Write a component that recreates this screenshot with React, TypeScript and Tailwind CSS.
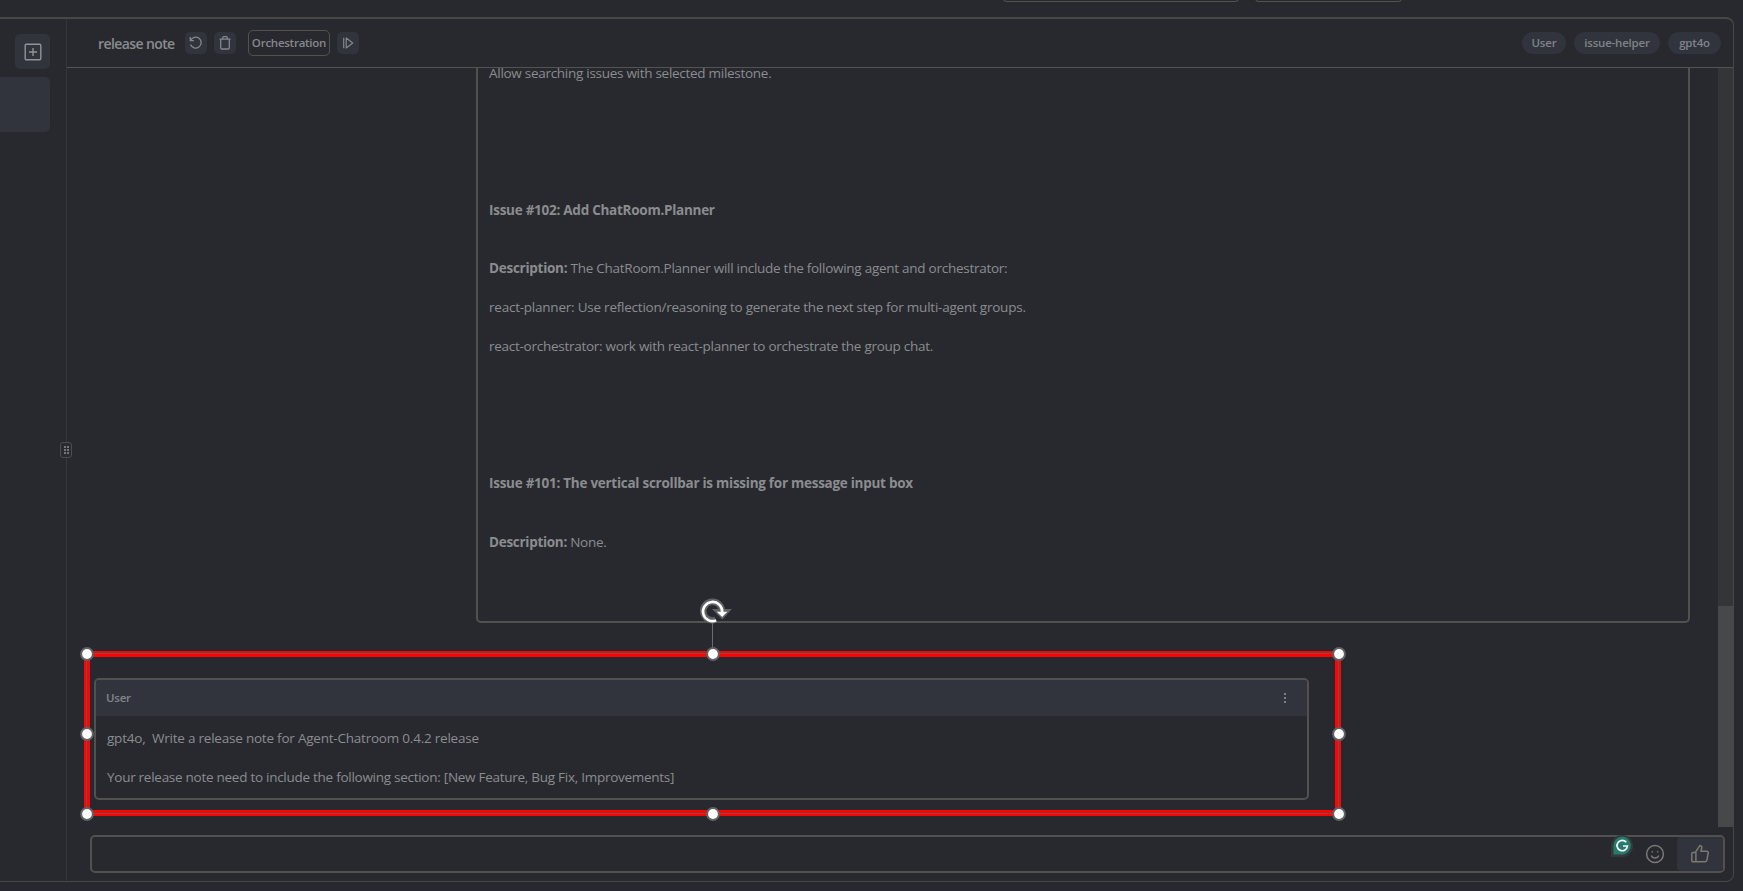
import React from "react";

const ICON = "fill-none stroke-current";

function ResetIcon() {
  return (
    <svg viewBox="0 0 14 14" className={`size-3.5 ${ICON}`} strokeWidth="1.3">
      <path d="M1.3 1v3.6h3.6M1.6 4.4A5.5 5.5 0 1 1 1.5 8.6" />
    </svg>
  );
}

function TrashIcon() {
  return (
    <svg viewBox="0 0 14 14" className={`size-3.5 ${ICON}`} strokeWidth="1.3">
      <path d="M1.5 3.2h11M4.8 3V1.6q0-.9.9-.9h2.6q.9 0 .9.9V3M2.7 3.4v8.4q0 1.2 1.2 1.2h6.2q1.2 0 1.2-1.2V3.4" />
    </svg>
  );
}

function StepIcon() {
  return (
    <svg viewBox="0 0 14 14" className={`size-3.5 ${ICON}`} strokeWidth="1.2">
      <path d="M2.7 1.800v10.400M5.200 2v10l6.500-5z" strokeLinejoin="round" />
    </svg>
  );
}

function PlusIcon() {
  return (
    <svg viewBox="0 0 18 18" className={`size-[18px] ${ICON}`} strokeWidth="1.4">
      <rect x="1.2" y="1.2" width="15.6" height="15.6" rx="1.2" />
      <path d="M9 5v8M5 9h8" />
    </svg>
  );
}

function SmileIcon() {
  return (
    <svg viewBox="0 0 20 20" className={`size-5 ${ICON}`} strokeWidth="1.5">
      <circle cx="10" cy="10" r="8.4" />
      <path d="M6.2 11.5q1 2.4 3.8 2.4t3.8-2.4" />
      <circle cx="7.3" cy="7.8" r=".6" className="fill-current" strokeWidth=".5" />
      <circle cx="12.7" cy="7.8" r=".6" className="fill-current" strokeWidth=".5" />
    </svg>
  );
}

function ThumbIcon() {
  return (
    <svg viewBox="0 0 20 20" className={`size-5 ${ICON}`} strokeWidth="1.5" strokeLinejoin="round">
      <path d="M1.8 9.4q0-1 1-1h2.6L9.3 2.3q.5-.9 1.4-.6 1.5.6 1.1 2.2l-.9 3.400h5.900q1.600.100 1.400 1.700l-1.300 7.200q-.300 1.600-1.900 1.600H3.200q-1.400 0-1.400-1.400zM5.900 8.400v9.200" />
    </svg>
  );
}

function IconButton({ children }: { children: React.ReactNode }) {
  return (
    <button className="flex size-[22px] items-center justify-center rounded-[5px] bg-[#31343c] text-[#84878b]">
      {children}
    </button>
  );
}

function Sidebar() {
  return (
    <aside className="relative w-[67px] shrink-0 border-r border-[#35363a] pt-[15px]">
      <button className="ml-[15px] flex size-[35px] items-center justify-center rounded-[5px] bg-[#31343c] text-[#909397]">
        <PlusIcon />
      </button>
      <div className="mt-2 h-[55px] w-[50px] rounded-r-[5px] bg-[#31343c]" />
      <div className="absolute top-[423px] -right-[6px] flex h-4 w-3 items-center justify-center rounded-[3px] border border-[#4d4c4a] bg-[#2a2b30]">
        <div className="grid grid-cols-2 gap-px">
          {[0, 1, 2, 3, 4, 5].map((i) => (
            <i key={i} className="size-[2px] bg-[#73767b]" />
          ))}
        </div>
      </div>
    </aside>
  );
}

function Header() {
  return (
    <header className="flex h-[49px] shrink-0 items-start border-b border-[#54534f] pr-3 pl-[31px] font-semibold">
      <h1 className="mt-[14px] w-[87px] text-[14px] leading-[22px] font-semibold tracking-[-0.6px] whitespace-nowrap text-[#898c8f]">
        release note
      </h1>
      <div className="mt-[13px] flex gap-[7px]">
        <IconButton><ResetIcon /></IconButton>
        <IconButton><TrashIcon /></IconButton>
      </div>
      <button className="mt-[11px] ml-[12px] flex h-[26px] w-[82px] items-center justify-center rounded-[5px] border border-[#54514d] text-[11.5px] tracking-[-0.250px] text-[#85888c]">
        Orchestration
      </button>
      <div className="mt-[13px] ml-[7px]">
        <IconButton><StepIcon /></IconButton>
      </div>
      <div className="mt-[13px] ml-auto flex h-[22px] gap-2 text-[11.5px] tracking-[-0.2px] text-[#7f8388]">
        <span className="flex w-[44px] items-center justify-center rounded-full bg-[#31343c]">User</span>
        <span className="flex w-[86px] items-center justify-center rounded-full bg-[#31343c]">issue-helper</span>
        <span className="flex w-[53px] items-center justify-center rounded-full bg-[#31343c]">gpt4o</span>
      </div>
    </header>
  );
}

function IssueCard() {
  return (
    <article className="ml-[409px] h-[555px] w-[1214px] shrink-0 rounded-b-[5px] border-2 border-t-0 border-[#53514d] pl-[11px] text-[13.5px] leading-[22px] whitespace-nowrap">
      <p className="-mt-[6px] tracking-[-0.28px]">Allow searching issues with selected milestone.</p>
      <h2 className="mt-[115px] font-bold tracking-[-0.265px]">Issue #102: Add ChatRoom.Planner</h2>
      <p className="mt-[36px] tracking-[-0.265px]">
        <b>Description:</b> The ChatRoom.Planner will include the following agent and orchestrator:
      </p>
      <p className="mt-[17px] tracking-[-0.23px]">
        react-planner: Use reflection/reasoning to generate the next step for multi-agent groups.
      </p>
      <p className="mt-[17px] tracking-[-0.27px]">
        react-orchestrator: work with react-planner to orchestrate the group chat.
      </p>
      <h2 className="mt-[115px] font-bold tracking-[-0.267px]">
        Issue #101: The vertical scrollbar is missing for message input box
      </h2>
      <p className="mt-[37px] tracking-[-0.29px]"><b>Description:</b> None.</p>
    </article>
  );
}

function UserCard() {
  return (
    <article className="mt-[55px] ml-[27px] h-[122px] w-[1215px] shrink-0 overflow-hidden rounded-[5px] border-2 border-[#53514d] text-[13.5px] leading-[22px] whitespace-nowrap">
      <div className="flex h-[36px] items-center justify-between bg-[#31343c] pr-[20px] pl-[10px] text-[11.5px] font-semibold tracking-[-0.25px] text-[#83868a]">
        <span>User</span>
        <svg viewBox="0 0 4 12" className="h-3 w-1 fill-[#909398]">
          <circle cx="2" cy="2" r="1.1" />
          <circle cx="2" cy="6" r="1.1" />
          <circle cx="2" cy="10" r="1.1" />
        </svg>
      </div>
      <p className="mt-[11px] pl-[11px] tracking-[-0.22px]">gpt4o,&nbsp; Write a release note for Agent-Chatroom 0.4.2 release</p>
      <p className="mt-[17px] pl-[11px] tracking-[-0.27px]">
        Your release note need to include the following section: [New Feature, Bug Fix, Improvements]
      </p>
    </article>
  );
}

function Composer() {
  return (
    <div className="relative mt-[8px] ml-[23px] flex h-[38px] w-[1635px] shrink-0 items-stretch justify-end rounded-[5px] border-2 border-[#53514d] text-[#7b7975]">
      <svg viewBox="0 0 26 26" className="absolute -top-[4px] right-[88px] size-[26px]">
        <path d="M2 24V13A11 11 0 1 1 13 24z" fill="#34393a" />
        <path d="M4.500 21.500V12.500A8.700 9 0 1 1 13.200 21.500z" fill="#267b6c" />
        <path d="M17.300 9.300A5.200 5.200 0 1 0 18.400 13H14" fill="none" stroke="#f4f8f7" strokeWidth="1.7" />
      </svg>
      <button className="mr-3 flex items-center"><SmileIcon /></button>
      <button className="flex w-[46px] items-center justify-center rounded-[4px] bg-[#31343c]"><ThumbIcon /></button>
    </div>
  );
}

const HANDLES: [number, number][] = [
  [87, 654], [713, 654], [1339, 654],
  [87, 734], [1339, 734],
  [87, 814], [713, 814], [1339, 814],
];

function Selection() {
  return (
    <>
      <div className="pointer-events-none absolute top-[651px] left-[84px] h-[165px] w-[1257px] border-6 border-[#fc0304]" />
      <svg viewBox="0 0 1743 891" className="pointer-events-none absolute top-0 left-0 h-[891px] w-[1743px]">
        <rect x="86.500" y="653.500" width="1252" height="160" fill="none" stroke="#6a5454" />
        <path d="M712.500 622V648" stroke="#6a6b6d" />
        {HANDLES.map(([x, y]) => (
          <circle key={`${x}-${y}`} cx={x} cy={y} r="5.900" fill="#fff" stroke="#616265" strokeWidth="2" />
        ))}
        <path d="M715.700 619.800A9.300 9.300 0 1 1 721.700 612.500" fill="none" stroke="#616265" strokeWidth="6.500" />
        <path d="M712 609H732L722.300 619.500z" fill="#616265" />
        <path d="M716.200 620.400A9.600 9.600 0 1 1 722.200 612" fill="none" stroke="#fff" strokeWidth="2.600" />
        <path d="M716.800 611.800H727.400L722.200 617z" fill="#fff" />
      </svg>
    </>
  );
}

export default function App() {
  return (
    <div className="relative flex h-[891px] w-[1743px] flex-col overflow-hidden bg-[#28292e] font-['Open_Sans','Noto_Sans',sans-serif] text-[#8a8d90]">
      <div className="flex h-[2px] shrink-0 items-end gap-[16px] pl-[1003px]">
        <div className="h-2 w-[236px] rounded-b-[4px] border border-t-0 border-[#54534f]" />
        <div className="h-2 w-[147px] rounded-b-[4px] border border-t-0 border-[#54534f]" />
      </div>
      <div className="mt-[15px] flex h-[865px] w-[1734px] shrink-0 rounded-r-[8px] border-[1.5px] border-t-2 border-l-0 border-[#484744]">
        <Sidebar />
        <main className="flex min-w-0 flex-1 flex-col">
          <Header />
          <div className="flex h-[759px] shrink-0">
            <div className="flex min-w-0 flex-1 flex-col">
              <IssueCard />
              <UserCard />
            </div>
            <div className="flex w-[15px] flex-col justify-end bg-[#343537]">
              <div className="h-[221px] bg-[#474849]" />
            </div>
          </div>
          <Composer />
        </main>
      </div>
      <Selection />
    </div>
  );
}
